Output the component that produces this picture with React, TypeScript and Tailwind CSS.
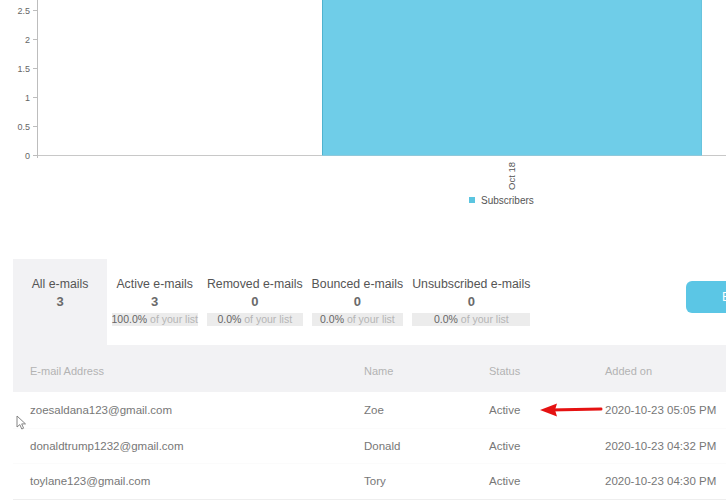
import React from "react";

const yTicks = [
  { label: "2.5", y: 10 },
  { label: "2", y: 39 },
  { label: "1.5", y: 68 },
  { label: "1", y: 97 },
  { label: "0.5", y: 126 },
  { label: "0", y: 155 },
];

const tabs = [
  { label: "Active e-mails", value: "3", pct: "100.0%" },
  { label: "Removed e-mails", value: "0", pct: "0.0%" },
  { label: "Bounced e-mails", value: "0", pct: "0.0%" },
  { label: "Unsubscribed e-mails", value: "0", pct: "0.0%" },
];

const rows = [
  { email: "zoesaldana123@gmail.com", name: "Zoe", status: "Active", added: "2020-10-23 05:05 PM" },
  { email: "donaldtrump1232@gmail.com", name: "Donald", status: "Active", added: "2020-10-23 04:32 PM" },
  { email: "toylane123@gmail.com", name: "Tory", status: "Active", added: "2020-10-23 04:30 PM" },
];

function Chart() {
  return (
    <svg width="726" height="212" className="block" style={{ fontFamily: "'Liberation Sans', Arial, sans-serif" }}>
      <rect x="322" y="-10" width="380" height="165" fill="#6fcde8" />
      <line x1="322.5" y1="-10" x2="322.5" y2="155" stroke="#4fb3cf" />
      <line x1="701.5" y1="-10" x2="701.5" y2="155" stroke="#68c4de" />
      <line x1="37" y1="155.5" x2="726" y2="155.5" stroke="#c8c8c8" />
      <line x1="322" y1="155.5" x2="702" y2="155.5" stroke="#8fc8da" />
      <line x1="37.5" y1="-5" x2="37.5" y2="158" stroke="#bdbdbd" />
      {yTicks.map((t) => (
        <g key={t.label}>
          <line x1="33" y1={t.y + 0.5} x2="37" y2={t.y + 0.5} stroke="#bdbdbd" />
          <text x="30" y={t.y + 3.5} textAnchor="end" fontSize="9" fill="#666">
            {t.label}
          </text>
        </g>
      ))}
      <text transform="translate(515 162) rotate(-90)" textAnchor="end" fontSize="9.5" fill="#555">
        Oct 18
      </text>
      <rect x="469" y="197" width="6" height="6" fill="#5bc5e0" />
      <text x="481" y="203.5" fontSize="10" fill="#555">
        Subscribers
      </text>
    </svg>
  );
}

export default function App() {
  return (
    <div
      className="relative w-[726px] h-[500px] overflow-hidden bg-white text-[#666]"
      style={{ fontFamily: "'Liberation Sans', Arial, sans-serif" }}
    >
      <Chart />

      <div className="ml-[13px] mt-[47px]">
        <div className="flex h-[86px] items-start">
          <div className="w-[94px] h-full bg-[#f2f2f4] pt-[18px] text-center">
            <div className="text-[12.3px] leading-[15px] text-[#555]">All e-mails</div>
            <div className="text-[13px] leading-[20px] font-bold text-[#6a6a6a]">3</div>
          </div>
          {tabs.map((t) => (
            <div key={t.label} className="px-[4.5px] pt-[18px] text-center">
              <div className="text-[12.3px] leading-[15px] text-[#555] whitespace-nowrap">{t.label}</div>
              <div className="text-[13px] leading-[20px] font-bold text-[#6a6a6a]">{t.value}</div>
              <div className="mt-[1px] bg-[#ececec] text-[10.5px] leading-[13px] whitespace-nowrap">
                <span className="text-[#666]">{t.pct}</span>
                <span className="text-[#b5b5b5]"> of your list</span>
              </div>
            </div>
          ))}
          <div className="ml-auto -mr-[40px] mt-[22px]">
            <button className="w-[80px] h-[32px] rounded-[6px] bg-[#5bc6e5] pl-[36px] text-left text-[12px] text-white whitespace-nowrap">
              Export
            </button>
          </div>
        </div>

        <div className="grid grid-cols-[334px_125px_116px_1fr] h-[47px] items-center bg-[#f2f2f4] pl-[17px] pt-[6px] text-[11px] text-[#b3b3b3]">
          <div>E-mail Address</div>
          <div>Name</div>
          <div>Status</div>
          <div>Added on</div>
        </div>

        <div className="border-b-2 border-[#eeeeee]">
          {rows.map((r, i) => (
            <div
              key={r.email}
              className={
                "grid grid-cols-[334px_125px_116px_1fr] h-[35.5px] items-center pl-[17px] pt-[1px] text-[11.5px] text-[#777] whitespace-nowrap" +
                (i > 0 ? " border-t border-[#fbfbfb]" : "")
              }
            >
              <div>{r.email}</div>
              <div>{r.name}</div>
              <div>{r.status}</div>
              <div>{r.added}</div>
            </div>
          ))}
        </div>
      </div>

      {/* red annotation arrow */}
      <svg className="absolute left-[538px] top-[402px]" width="66" height="16">
        <line x1="12" y1="8" x2="63" y2="7" stroke="#e51212" strokeWidth="3" strokeLinecap="round" />
        <polygon points="2,8 19,1.5 17,8 19,14.5" fill="#e51212" />
      </svg>

      {/* mouse cursor */}
      <svg className="absolute left-[16px] top-[415px]" width="12" height="16" viewBox="0 0 12 16">
        <path d="M1 1 L1 12 L3.8 9.6 L5.8 14 L7.6 13.2 L5.7 8.9 L9.5 8.9 Z" fill="#fff" stroke="#777" strokeWidth="0.9" strokeLinejoin="round" />
      </svg>
    </div>
  );
}
